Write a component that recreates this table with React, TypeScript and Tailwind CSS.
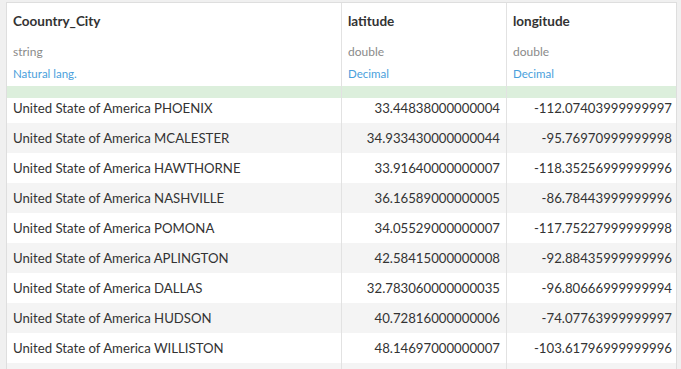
const rows = [
  ['United State of America PHOENIX', '33.44838000000004', '-112.07403999999997'],
  ['United State of America MCALESTER', '34.933430000000044', '-95.76970999999998'],
  ['United State of America HAWTHORNE', '33.91640000000007', '-118.35256999999996'],
  ['United State of America NASHVILLE', '36.16589000000005', '-86.78443999999996'],
  ['United State of America POMONA', '34.05529000000007', '-117.75227999999998'],
  ['United State of America APLINGTON', '42.58415000000008', '-92.88435999999996'],
  ['United State of America DALLAS', '32.783060000000035', '-96.80666999999994'],
  ['United State of America HUDSON', '40.72816000000006', '-74.07763999999997'],
  ['United State of America WILLISTON', '48.14697000000007', '-103.61796999999996'],
  ['', '', ''],
];

const cols = [
  { name: 'Coountry_City', type: 'string', meaning: 'Natural lang.', width: 'w-[334px]' },
  { name: 'latitude', type: 'double', meaning: 'Decimal', width: 'w-[165px]' },
  { name: 'longitude', type: 'double', meaning: 'Decimal', width: 'flex-1' },
];

export default function App() {
  return (
    <div className="w-[681px] h-[369px] overflow-hidden bg-[#f0f0f0] pt-[2px] pl-[6px] pr-[4px] font-['Lato',sans-serif] text-[#333]">
      <div className="h-full bg-white border-l border-t border-r border-[#dedede] flex flex-col">
        {/* header */}
        <div className="flex h-[83px] shrink-0">
          {cols.map((c, i) => (
            <div key={c.name} className={`${c.width} ${i > 0 ? 'border-l border-[#e2e2e2]' : ''} pl-[6px] pt-[8px]`}>
              <div className="text-[13.5px] font-bold leading-[20px] text-[#333]">{c.name}</div>
              <div className="mt-[13px] text-[12px] leading-[15px] text-[#8a8a8a]">{c.type}</div>
              <div className="mt-[7px] text-[11.5px] leading-[15px] text-[#4a9fdc]">{c.meaning}</div>
            </div>
          ))}
        </div>
        <div className="flex h-[12px] shrink-0 bg-[#dcefdc]">
          <div className="w-[334px]" />
          <div className="w-[165px] border-l border-[#e2e2e2]" />
          <div className="flex-1 border-l border-[#e2e2e2]" />
        </div>
        {rows.map((r, i) => (
          <div
            key={i}
            className={`flex shrink-0 text-[13.2px] ${i === 0 ? 'h-[25px] items-start' : 'h-[30px] items-center'} ${i % 2 === 1 ? 'bg-[#f4f4f4]' : 'bg-white'}`}
          >
            <div className={`w-[334px] pl-[6px] ${i === 0 ? 'leading-[20px]' : 'leading-[30px]'}`}>{r[0]}</div>
            <div className={`w-[165px] h-full border-l border-[#e2e2e2] text-right pr-[6px] ${i === 0 ? 'leading-[20px]' : 'leading-[30px]'}`}>{r[1]}</div>
            <div className={`flex-1 h-full border-l border-[#e2e2e2] text-right pr-[4px] ${i === 0 ? 'leading-[20px]' : 'leading-[30px]'}`}>{r[2]}</div>
          </div>
        ))}
      </div>
    </div>
  );
}
